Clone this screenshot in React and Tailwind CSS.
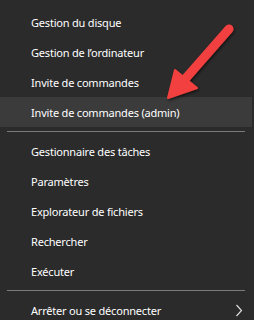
import React from "react";

const Row = ({ children, hl }) => (
  <div className={`h-[30px] flex items-center pl-[31px] pt-[1px] ${hl ? "bg-[#3b3b3b]" : ""}`}>
    <span className="text-[11px] tracking-[-0.2px] text-white leading-none">{children}</span>
  </div>
);

const Sep = () => (
  <div className="h-[9px] flex items-center pl-[7px] pr-[7px]">
    <div className="h-px w-full bg-[#7a7a7a]" />
  </div>
);

export default function App() {
  return (
    <div
      className="relative w-[254px] h-[320px] overflow-hidden bg-[#2b2b2b] pt-[7px] pr-[2px]"
      style={{ fontFamily: '"Noto Sans", "Open Sans", sans-serif' }}
    >
      <Row>Gestion du disque</Row>
      <Row>Gestion de l’ordinateur</Row>
      <Row>Invite de commandes</Row>
      <Row hl>Invite de commandes (admin)</Row>
      <Sep />
      <Row>Gestionnaire des tâches</Row>
      <Row>Paramètres</Row>
      <Row>Explorateur de fichiers</Row>
      <Row>Rechercher</Row>
      <Row>Exécuter</Row>
      <Sep />
      <div className="h-[30px] flex items-center pl-[31px] pr-[9px] pt-[1px] justify-between">
        <span className="text-[11px] tracking-[-0.2px] text-white leading-none">Arrêter ou se déconnecter</span>
        <svg width="8" height="13" viewBox="0 0 8 13">
          <path d="M1.5 1 L6.5 6.5 L1.5 12" fill="none" stroke="#dcdcdc" strokeWidth="1.2" />
        </svg>
      </div>
      <svg
        className="absolute left-0 top-0 pointer-events-none"
        width="254"
        height="320"
        viewBox="0 0 254 320"
      >
        <defs>
          <filter id="sh" x="-20%" y="-20%" width="140%" height="140%">
            <feDropShadow dx="1" dy="1.5" stdDeviation="1.5" floodColor="#000" floodOpacity="0.6" />
          </filter>
        </defs>
        <g filter="url(#sh)">
          <line x1="229" y1="29" x2="186" y2="78" stroke="#f2413f" strokeWidth="9" strokeLinecap="round" />
          <polygon points="168,98 175,70 197,88" fill="#f2413f" stroke="#f2413f" strokeWidth="2" strokeLinejoin="round" />
        </g>
      </svg>
    </div>
  );
}
